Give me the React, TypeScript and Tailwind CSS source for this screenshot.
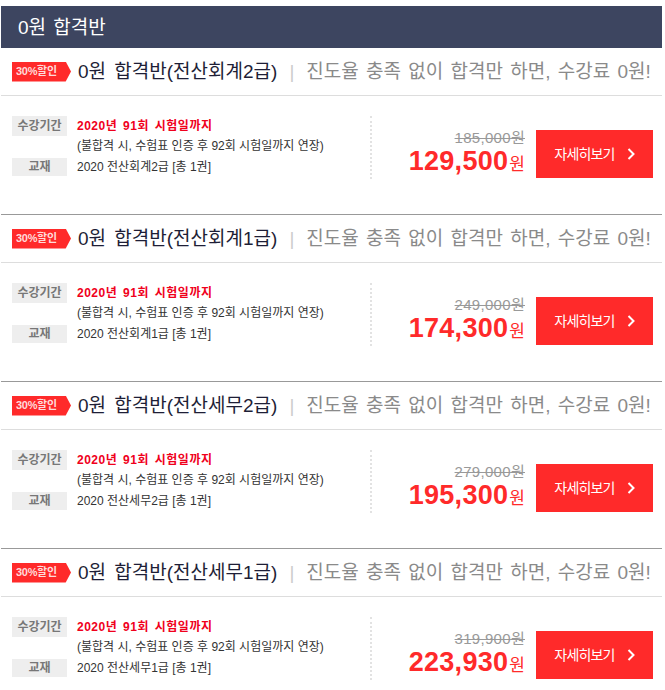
import React from "react";

type Item = { name: string; orig: string; price: string };

const items: Item[] = [
  { name: "전산회계2급", orig: "185,000", price: "129,500" },
  { name: "전산회계1급", orig: "249,000", price: "174,300" },
  { name: "전산세무2급", orig: "279,000", price: "195,300" },
  { name: "전산세무1급", orig: "319,900", price: "223,930" },
];

function Section({ item }: { item: Item }) {
  return (
    <div className="border-b border-[#999999]">
      <div className="h-[48px] flex items-center border-b border-[#dddddd]">
        <div className="ml-[11px] w-[59px] h-[20px] bg-[#ff2a2a] flex items-center pl-[4px] [clip-path:polygon(0_0,91%_0,100%_50%,91%_100%,0_100%)]">
          <span className="text-[11px] font-bold text-[#ffdada] tracking-[-0.3px] leading-none">30%할인</span>
        </div>
        <span className="ml-[7px] text-[19px] text-[#1e1e36] leading-none [word-spacing:3px]">0원 합격반({item.name})</span>
        <span className="ml-[12px] text-[19px] text-[#cccccc] leading-none">|</span>
        <span className="ml-[12px] text-[19px] text-[#8a8a8a] leading-none [word-spacing:2px]">진도율 충족 없이 합격만 하면, 수강료 0원!</span>
      </div>
      <div className="h-[118px] pt-[20px] flex">
        <div className="w-[369px] pl-[11px] grid grid-cols-[55px_1fr] gap-x-[10px] grid-rows-[20px_20px_20px] content-start">
          <div className="bg-[#eeeeee] flex items-center justify-center text-[12px] font-bold text-[#777777] leading-none">수강기간</div>
          <div className="flex items-center text-[12px] font-bold text-[#f0001c] leading-none tracking-[0.5px] [word-spacing:2px]">2020년 91회 시험일까지</div>
          <div></div>
          <div className="flex items-center text-[12px] text-[#333333] leading-none">(불합격 시, 수험표 인증 후 92회 시험일까지 연장)</div>
          <div className="mt-[2px] bg-[#eeeeee] flex items-center justify-center text-[12px] font-bold text-[#777777] leading-none">교재</div>
          <div className="mt-[2px] flex items-center text-[12px] text-[#333333] leading-none">2020 {item.name} [총 1권]</div>
        </div>
        <div className="h-[63px] border-l-2 border-dotted border-[#e2e2e2]"></div>
        <div className="flex-1 h-[63px] flex items-end justify-end pr-[9px]">
          <div className="flex items-center gap-[11px]">
            <div className="flex flex-col items-end">
              <span className="text-[15px] text-[#999999] line-through leading-[18px] tracking-[0.3px]">{item.orig}원</span>
              <span className="flex items-baseline text-[#ff2a2a] leading-[28px]">
                <span className="text-[27px] font-bold font-['Liberation_Sans',sans-serif] tracking-[0.3px]">{item.price}</span>
                <span className="text-[17px] ml-[1px]">원</span>
              </span>
            </div>
            <div className="w-[117px] h-[48px] bg-[#ff2a2a] flex items-center justify-center gap-[12px] text-white">
              <span className="text-[14px] tracking-[-0.8px] leading-none">자세히보기</span>
              <svg width="8" height="12" viewBox="0 0 8 12" fill="none">
                <path d="M1.5 1 L6.5 6 L1.5 11" stroke="white" strokeWidth="2" />
              </svg>
            </div>
          </div>
        </div>
      </div>
    </div>
  );
}

export default function App() {
  return (
    <div className="bg-white min-h-[690px] pt-[6px] font-['Liberation_Sans','Noto_Sans_CJK_KR',sans-serif]">
      <div className="ml-px w-[661px]">
        <div className="h-[42px] bg-[#3d4560] flex items-center pl-[17px]">
          <span className="text-white text-[19px] leading-none [word-spacing:2px]">0원 합격반</span>
        </div>
        {items.map((it) => (
          <Section key={it.name} item={it} />
        ))}
      </div>
    </div>
  );
}
